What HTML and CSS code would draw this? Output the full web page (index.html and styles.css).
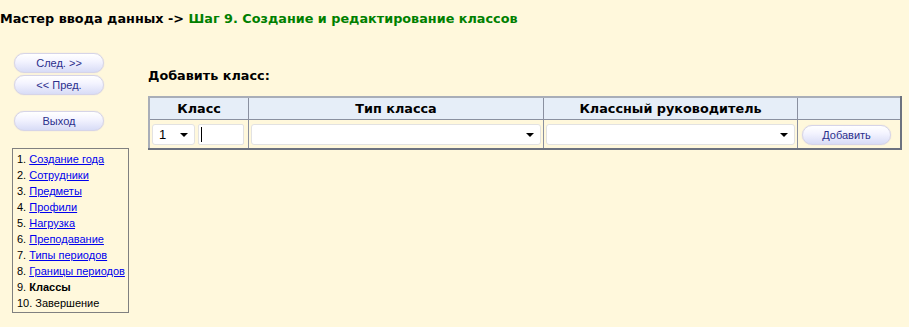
FILE: index.html
```html
<!DOCTYPE html>
<html lang="ru">
<head>
    <meta charset="UTF-8">
    <title>Мастер ввода данных</title>
    <link rel="stylesheet" href="styles.css">
</head>
<body>
    <h1 class="title">Мастер ввода данных -&gt; <span class="step">Шаг 9. Создание и редактирование классов</span></h1>

    <div class="layout">
        <div class="sidebar">
            <button class="pill">След. &gt;&gt;</button>
            <button class="pill">&lt;&lt; Пред.</button>
            <button class="pill exit">Выход</button>

            <ul class="steps">
                <li>1. <a href="#">Создание года</a></li>
                <li>2. <a href="#">Сотрудники</a></li>
                <li>3. <a href="#">Предметы</a></li>
                <li>4. <a href="#">Профили</a></li>
                <li>5. <a href="#">Нагрузка</a></li>
                <li>6. <a href="#">Преподавание</a></li>
                <li>7. <a href="#">Типы периодов</a></li>
                <li>8. <a href="#">Границы периодов</a></li>
                <li>9. <b>Классы</b></li>
                <li>10. Завершение</li>
            </ul>
        </div>

        <div class="main">
            <h2 class="subtitle">Добавить класс:</h2>
            <table class="grid">
                <tr>
                    <th class="c1">Класс</th>
                    <th class="c2">Тип класса</th>
                    <th class="c3">Классный руководитель</th>
                    <th class="c4"></th>
                </tr>
                <tr>
                    <td>
                        <div class="pair">
                            <div class="sel small"><span>1</span><i class="arrow"></i></div>
                            <div class="txt"><span class="caret"></span></div>
                        </div>
                    </td>
                    <td><div class="sel"><span></span><i class="arrow"></i></div></td>
                    <td><div class="sel"><span></span><i class="arrow"></i></div></td>
                    <td><button class="pill add">Добавить</button></td>
                </tr>
            </table>
        </div>
    </div>
</body>
</html>
```

FILE: styles.css
```css
body {
    margin: 0;
    background-color: #fff8dc;
    font-family: "DejaVu Sans", Verdana, sans-serif;
    color: #000;
}

.title {
    margin: 0;
    padding: 11px 0 0 0;
    height: 25px;
    font-size: 12.8px;
    font-weight: bold;
    white-space: nowrap;
}

.step {
    color: #008000;
}

.layout {
    display: flex;
    padding-top: 17px;
}

.sidebar {
    width: 148px;
    display: flex;
    flex-direction: column;
    align-items: flex-start;
}

.pill {
    height: 20px;
    padding: 0;
    border: 1px solid #d6d4e8;
    border-radius: 10px;
    background: linear-gradient(#ffffff 0%, #f4f4ff 40%, #d8dcf6 100%);
    box-shadow: 0 0 1px #c8c6dc;
    color: #2b2f8c;
    font-family: "Liberation Sans", Arial, sans-serif;
    font-size: 11px;
    cursor: pointer;
}

.sidebar .pill {
    width: 90px;
    margin-left: 14px;
    margin-bottom: 2px;
}

.sidebar .exit {
    margin-top: 14px;
}

.steps {
    list-style-type: none;
    margin: 15px 0 0 12px;
    padding: 2px 0 1px 4px;
    width: 111px;
    border: 1px solid #808080;
    font-family: "Liberation Sans", Arial, sans-serif;
    font-size: 11px;
}

.steps li {
    height: 16px;
    line-height: 16px;
    white-space: nowrap;
}

.steps a {
    color: #0000ee;
}

.main {
    flex: 1;
    padding-top: 15px;
}

.subtitle {
    margin: 0;
    height: 28px;
    font-size: 12.8px;
    font-weight: bold;
}

.grid {
    table-layout: fixed;
    width: 747px;
    border-collapse: collapse;
    border: 2px solid #7c8290;
    border-color: #a9aeb8 #6c7280 #6c7280 #a9aeb8;
}

.grid th,
.grid td {
    border: 1px solid #8a90a0;
    padding: 0;
}

.grid th {
    height: 21px;
    background-color: #e6eef8;
    font-size: 12.8px;
    font-weight: bold;
}

.grid td {
    height: 28px;
    padding: 0 2px;
}

.c1 { width: 98px; }
.c2 { width: 294px; }
.c3 { width: 253px; }
.c4 { width: 102px; }

.pair {
    display: flex;
    gap: 3px;
}

.sel {
    box-sizing: border-box;
    height: 21px;
    border: 1px solid #e2e2e2;
    border-radius: 3px;
    background-color: #fff;
    display: flex;
    align-items: center;
    justify-content: space-between;
    padding: 0 6px 0 6px;
    font-family: "Liberation Sans", Arial, sans-serif;
    font-size: 13px;
    color: #000;
}

.sel.small {
    width: 43px;
}

.arrow {
    width: 0;
    height: 0;
    border-left: 4px solid transparent;
    border-right: 4px solid transparent;
    border-top: 4px solid #000;
    margin-top: 2px;
}

.txt {
    box-sizing: border-box;
    width: 46px;
    height: 21px;
    border: 1px solid #e2e2e2;
    border-radius: 2px;
    background-color: #fff;
    display: flex;
    align-items: center;
    padding-left: 2px;
}

.caret {
    width: 1px;
    height: 15px;
    background-color: #000;
}

.add {
    width: 89px;
    margin-left: 2px;
    color: #2b2f8c;
}
```
